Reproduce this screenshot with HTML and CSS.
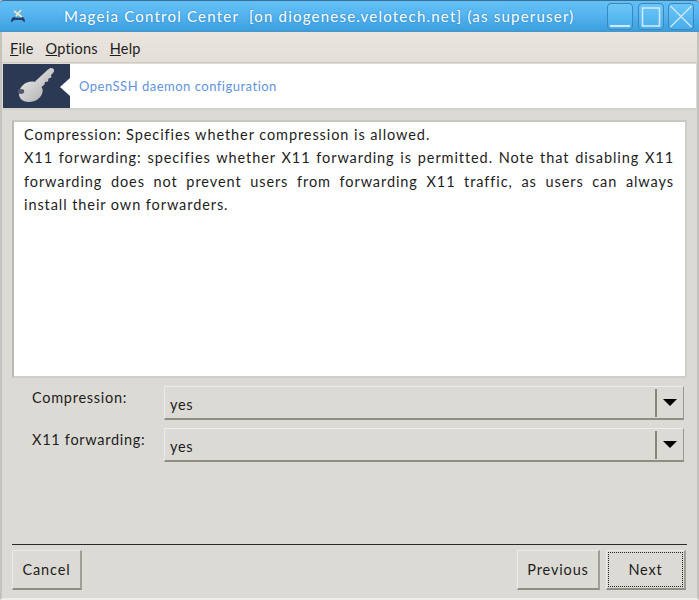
FILE: index.html
```html
<!DOCTYPE html>
<html lang="en">
<head>
<meta charset="utf-8">
<title>Mageia Control Center</title>
<link rel="stylesheet" href="styles.css">
</head>
<body>
<div class="window">
  <header class="titlebar">
    <svg class="app-icon" width="16" height="16" viewBox="0 0 16 16">
      <path d="M1 14c0-4 2-5 3-5 1 1 7 1 8 0 1 0 3 1 3 5-2 0-2-2-4-2H5c-2 0-2 2-4 2z" fill="#26406a"/>
      <path d="M4 3l8 6M11 2L6 8" stroke="#f2e6c0" stroke-width="1.6"/>
    </svg>
    <div class="title">Mageia Control Center&nbsp; [on diogenese.velotech.net] (as superuser)</div>
    <div class="win-buttons">
      <div class="win-btn"><svg width="26" height="27" viewBox="0 0 26 27"><path d="M3 23h20" stroke="#cfe8fb" stroke-width="2"/></svg></div>
      <div class="win-btn"><svg width="26" height="27" viewBox="0 0 26 27"><rect x="4.500" y="5" width="17" height="18" fill="none" stroke="#cfe8fb" stroke-width="1.600"/></svg></div>
      <div class="win-btn"><svg width="26" height="27" viewBox="0 0 26 27"><path d="M2.500 3l21 21M23.500 3l-21 21" stroke="#cfe8fb" stroke-width="1.300"/></svg></div>
    </div>
  </header>
  <nav class="menubar">
    <span class="menu-item"><u>F</u>ile</span>
    <span class="menu-item"><u>O</u>ptions</span>
    <span class="menu-item"><u>H</u>elp</span>
  </nav>
  <section class="banner">
    <div class="banner-icon">
      <svg width="67" height="44" viewBox="0 0 67 44">
        <defs>
          <linearGradient id="keyfill" x1="0" y1="0" x2="1" y2="1">
            <stop offset="0" stop-color="#f4f4f4"/>
            <stop offset="1" stop-color="#a6a6a6"/>
          </linearGradient>
        </defs>
        <path d="M32 17.500L45 5.500c1.500-1.500 4-2 5-1 1.500 1 1.500 3 0 4.500l-2 2 .5 2.500-3 1-.5 3-3 .5-.5 2.500-3 2.500c1 1.500 1.500 3 1 5-1 6-7 10-13.500 10-5.500 0-10-3-10-8 0-7 6-12.500 13-12.500 1.500 0 3 .3 4 .5z" fill="url(#keyfill)"/>
        <ellipse cx="18" cy="27.500" rx="3.200" ry="2.400" fill="#55586a"/>
      </svg>
      <span class="banner-notch"></span>
    </div>
    <div class="banner-title">OpenSSH daemon configuration</div>
  </section>
  <main class="content">
    <div class="textbox">
      <p class="help-line">Compression: Specifies whether compression is allowed.</p>
      <p class="help-para">
        <span class="just-line">X11 forwarding: specifies whether X11 forwarding is permitted. Note that disabling X11</span>
        <span class="just-line">forwarding does not prevent users from forwarding X11 traffic, as users can always</span>
        <span class="last-line">install their own forwarders.</span>
      </p>
    </div>
    <div class="form">
      <div class="form-row">
        <label class="form-label">Compression:</label>
        <div class="combo"><span class="combo-value">yes</span><span class="combo-arrow"><i class="triangle"></i></span></div>
      </div>
      <div class="form-row">
        <label class="form-label">X11 forwarding:</label>
        <div class="combo"><span class="combo-value">yes</span><span class="combo-arrow"><i class="triangle"></i></span></div>
      </div>
    </div>
    <div class="footer">
      <button class="btn btn-cancel">Cancel</button>
      <div class="footer-right">
        <button class="btn btn-prev">Previous</button>
        <button class="btn btn-next"><span class="focus-ring">Next</span></button>
      </div>
    </div>
  </main>
</div>
</body>
</html>
```
FILE: styles.css
```css
* { box-sizing: border-box; }
html, body { margin: 0; padding: 0; }
body {
  width: 699px;
  height: 600px;
  overflow: hidden;
  background: #dcdad5;
  font-family: "Lato", "DejaVu Sans", sans-serif;
  font-size: 14px;
  color: #1d1d1d;
}
.window {
  width: 699px;
  height: 600px;
  display: flex;
  flex-direction: column;
  border-left: 2px solid #c4c2bd;
  border-right: 2px solid #c4c2bd;
  border-bottom: 2px solid #efede9;
}
.titlebar {
  height: 32px;
  margin: 0 -2px;
  flex: none;
  display: flex;
  align-items: center;
  padding: 0 5px 0 10px;
  background: linear-gradient(#62c0f6 0, #58b6f1 40%, #3b9fdf 100%);
  border-top: 1px solid #3a6f96;
  border-bottom: 1px solid #4e94c3;
  border-radius: 4px 4px 0 0;
}
.app-icon { flex: none; }
.title {
  flex: 1;
  margin-left: 38px;
  color: #fff;
  font-size: 15px;
  letter-spacing: 1.22px;
  white-space: nowrap;
  text-shadow: 0 0 2px #2a7fb8;
}
.win-buttons { display: flex; gap: 4.500px; flex: none; }
.win-btn {
  width: 26px;
  height: 27px;
  border: 1px solid #3b86ba;
  border-radius: 4px;
  background: linear-gradient(#6cc6f8, #48aeec);
  display: flex;
  align-items: center;
  justify-content: center;
}
.win-btn svg { flex: none; }
.menubar {
  height: 31px;
  flex: none;
  display: flex;
  align-items: center;
  gap: 12px;
  padding: 2px 0 0 8px;
  background: linear-gradient(#eae6df, #e3dfd8);
  border-bottom: 1px solid #cfccc5;
  font-size: 14.500px;
  letter-spacing: 0.2px;
}
.banner {
  height: 46px;
  flex: none;
  margin: 1px 1px 0;
  display: flex;
  align-items: center;
  background: #fff;
  border-bottom: 2px solid #d3d1cb;
}
.banner-icon {
  position: relative;
  width: 67px;
  height: 44px;
  flex: none;
  background: #2c3955;
  overflow: hidden;
}
.banner-icon svg { display: block; }
.banner-notch {
  position: absolute;
  right: 0;
  top: 14px;
  border-top: 9px solid transparent;
  border-bottom: 9px solid transparent;
  border-right: 10px solid #fff;
}
.banner-title {
  margin-left: 9px;
  font-size: 13px;
  letter-spacing: 0.5px;
  color: #5f93de;
}
.content {
  flex: 1;
  display: flex;
  flex-direction: column;
  padding: 10px 10px 8px;
  min-height: 0;
}
.textbox {
  height: 258px;
  flex: none;
  padding: 1px 11px 1px 10px;
  background: #fff;
  border: 2px solid #d0cec8;
  border-top-color: #c8c6c0;
  border-left-color: #bcbab4;
  font-size: 14.500px;
  line-height: 23.300px;
  letter-spacing: 0.92px;
}
.help-line { margin: 0; }
.help-para { margin: 0; }
.just-line { display: block; text-align: justify; text-align-last: justify; }
.last-line { display: block; }
.form {
  display: flex;
  flex-direction: column;
  gap: 8px;
  margin-top: 8px;
  padding-left: 20px;
}
.form-row {
  display: flex;
  align-items: flex-start;
  height: 34px;
}
.form-label {
  width: 132px;
  flex: none;
  padding-top: 3px;
  font-size: 14.500px;
  letter-spacing: 0.72px;
}
.combo {
  width: 520px;
  height: 34px;
  display: flex;
  align-items: center;
  background: #dcdad5;
  border: 1px solid #ecebe7;
  border-right-color: #9a9890;
  border-bottom: 2px solid #8f8d85;
  font-size: 14.500px;
  letter-spacing: 0.7px;
}
.combo-value { flex: 1; padding: 4px 0 0 5px; }
.combo-arrow {
  width: 28px;
  height: 28px;
  flex: none;
  display: flex;
  align-items: center;
  justify-content: center;
  border-left: 2px solid #87857e;
}
.triangle {
  width: 0;
  height: 0;
  border-left: 7px solid transparent;
  border-right: 7px solid transparent;
  border-top: 7px solid #000;
}
.footer {
  margin-top: auto;
  border-top: 1px solid #2a2a28;
  display: flex;
  justify-content: space-between;
  padding-top: 5px;
}
.footer-right { display: flex; gap: 6px; margin-right: 1px; }
.btn {
  height: 40px;
  padding: 0;
  font: inherit;
  font-size: 14.500px;
  letter-spacing: 0.85px;
  color: #1d1d1d;
  background: #dcdad5;
  border: 1px solid #ecebe7;
  border-right: 2px solid #a09e96;
  border-bottom: 2px solid #8f8d85;
}
.btn-cancel { width: 70px; }
.btn-prev { width: 83px; }
.btn-next { width: 80px; padding: 1px; }
.focus-ring {
  display: flex;
  align-items: center;
  justify-content: center;
  height: 100%;
  border: 1px dotted #222;
}
```
